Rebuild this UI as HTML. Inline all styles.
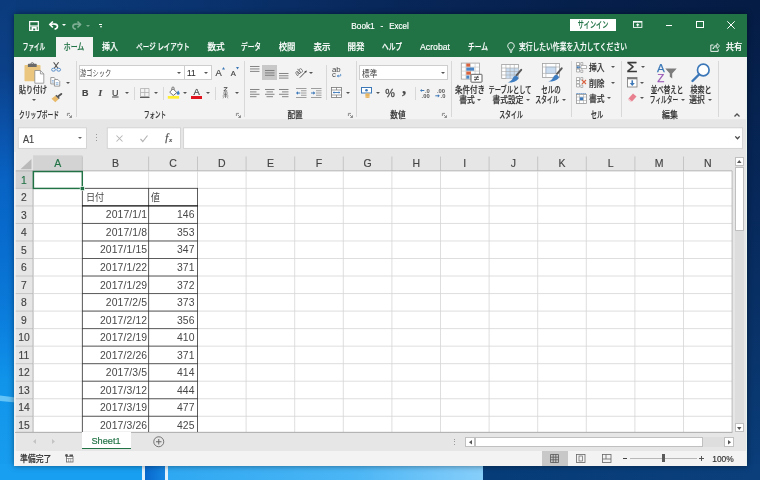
<!DOCTYPE html><html lang="ja"><head><meta charset="utf-8"><title>Book1 - Excel</title><style>
html,body{margin:0;padding:0}
body{width:760px;height:480px;overflow:hidden;position:relative;background:#0a3a7c;font-family:"Liberation Sans","Noto Sans CJK JP",sans-serif;font-size:9.2px;color:#333;font-weight:500;-webkit-text-stroke:.18px currentColor}
.a{position:absolute}
.t{position:absolute;white-space:nowrap;transform:translate(-50%,-50%);line-height:1}
.w{color:#fff}
.l{position:absolute;white-space:nowrap;transform:translate(0,-50%);line-height:1}
.r{position:absolute;white-space:nowrap;transform:translate(-100%,-50%);line-height:1}
.sep{position:absolute;width:1px;background:#d4d4d4}
.box{position:absolute;background:#fff;border:1px solid #cecece;box-sizing:border-box}
.dd{position:absolute;width:0;height:0;border-left:2px solid transparent;border-right:2px solid transparent;border-top:2.5px solid #555;transform:translate(-50%,-50%)}
.cell{font-size:10.4px;color:#484848;font-weight:400;letter-spacing:.12px;-webkit-text-stroke:0}
.hd{font-size:10.3px;color:#444;font-weight:400;-webkit-text-stroke:.15px currentColor}
svg{position:absolute;overflow:visible}
#root{position:absolute;left:0;top:0;width:760px;height:480px;will-change:transform}
</style></head><body><div id="root">
<div class="a" style="left:0;top:0;width:760px;height:480px;background:linear-gradient(90deg,#0b3b7c 0%,#0a3470 25%,#08275a 50%,#06204c 75%,#051c44 100%)"></div>
<div class="a" style="left:0;top:0;width:16px;height:480px;background:linear-gradient(180deg,#0b3b7c 0px,#0b4088 70px,#0a52aa 130px,#0863c4 180px,#076acc 230px,#0a78d8 300px,#0d88e4 350px,#1094ea 380px,#189ef0 480px)"></div>
<div class="a" style="left:0;top:0;width:16px;height:16px;background:linear-gradient(90deg,rgba(12,63,130,0),rgba(12,63,130,0))"></div>
<svg style="left:0;top:390px" width="16" height="16" viewBox="0 0 16 16"><path d="M0 5.500L16 7.500V12.500L0 11z" fill="#74ccf9" opacity=".85"/></svg>
<div class="a" style="left:745px;top:0;width:15px;height:480px;background:linear-gradient(180deg,#051c44 0px,#07285a 200px,#09366e 380px,#0a3f7c 480px)"></div>
<div class="a" style="left:0;top:464px;width:143px;height:16px;background:#189ff2"></div>
<div class="a" style="left:142px;top:464px;width:26px;height:16px;background:#e2f2fd"></div>
<div class="a" style="left:145px;top:464px;width:19.500px;height:16px;background:linear-gradient(90deg,#0868cc,#1586e2)"></div>
<div class="a" style="left:168px;top:464px;width:314.500px;height:16px;background:linear-gradient(90deg,#2ea8f2 0%,#4cb6f5 60%,#86cefa 100%)"></div>
<div class="a" style="left:482.500px;top:464px;width:277.500px;height:16px;background:linear-gradient(90deg,#063c78,#0a3f7c)"></div>
<div class="a" style="left:14px;top:14px;width:733px;height:452px;background:#e6e6e6;box-shadow:0 0 6px rgba(0,0,0,.45)"></div>
<div class="a" style="left:14px;top:14px;width:733px;height:43.5px;background:#217346"></div>
<div class="a" style="left:14px;top:57px;width:733px;height:62.500px;background:linear-gradient(180deg,#f3f3f3 0px,#f3f3f3 61.500px,#e9e9e9 62.500px)"></div>
<div class="t w" style="left:362.5px;top:25.7px;font-size:8.4px;transform-origin:50% 50%;transform:translate(-50%,-50%) scaleX(0.985)">Book1</div>
<div class="t w" style="left:382px;top:25.7px;font-size:8.4px">-</div>
<div class="t w" style="left:398.9px;top:25.7px;font-size:8.4px;transform-origin:50% 50%;transform:translate(-50%,-50%) scaleX(0.947)">Excel</div>
<svg style="left:28.800px;top:20.700px" width="10" height="10" viewBox="0 0 15 15"><path d="M1 1h13v13H1z" fill="none" stroke="#fff" stroke-width="1.800"/><path d="M1 6.600h13v1.700H1z" fill="#fff"/><path d="M3.800 8.300h7.800v5.700h-7.800z" fill="#fff"/><path d="M6.300 11.300h3v2.700h-3z" fill="#217346"/></svg>
<svg style="left:48.900px;top:20.900px" width="9.400" height="8.600" viewBox="0 0 9.400 8.600"><path d="M.9 3.500C4 2.700 8.600 2.600 8.500 5.300C8.400 7 7.300 7.900 5.600 8.100" fill="none" stroke="#fff" stroke-width="1.650"/><path d="M3.900 .5L.9 3.500L3.900 6.500" fill="none" stroke="#fff" stroke-width="1.650"/></svg>
<div class="dd" style="left:64px;top:25.2px;border-top-color:#fff"></div>
<svg style="left:71.800px;top:20.900px;opacity:.42" width="9.400" height="8.600" viewBox="0 0 9.400 8.600"><path d="M8.500 3.500C5.400 2.700 .8 2.600 .9 5.300C1 7 2.100 7.900 3.800 8.100" fill="none" stroke="#fff" stroke-width="1.600"/><path d="M5.500 .5L8.500 3.500L5.500 6.500" fill="none" stroke="#fff" stroke-width="1.600"/></svg>
<div class="dd" style="left:87.5px;top:25.5px;border-top-color:#fff;opacity:.4"></div>
<div class="a" style="left:98.800px;top:23.700px;width:3.400px;height:1px;background:#fff"></div>
<div class="dd" style="left:100.500px;top:27.200px;border-top-color:#fff;border-left-width:1.700px;border-right-width:1.700px;border-top-width:2.200px"></div>
<div class="a" style="left:570px;top:18.7px;width:45.5px;height:12.6px;background:#fff"></div>
<div class="t" style="left:592.75px;top:26.3px;color:#217346;transform-origin:50% 50%;transform:translate(-50%,-50%) scaleX(0.664)">サインイン</div>
<svg style="left:632.800px;top:21.200px" width="9.400" height="6.900" viewBox="0 0 9.400 6.900"><rect x=".5" y=".5" width="8.400" height="5.900" fill="none" stroke="#fff" stroke-width=".9"/><rect x=".5" y=".5" width="8.400" height="1.100" fill="#fff"/><path d="M4.700 2.200L6.700 4.300H5.300V5.600H4.100V4.300H2.700z" fill="#fff"/></svg>
<div class="a" style="left:666px;top:24.500px;width:6.400px;height:1px;background:#fff"></div>
<div class="a" style="left:696.3px;top:20.8px;width:7.4px;height:7.4px;border:1px solid #fff;box-sizing:border-box"></div>
<svg style="left:727px;top:20.6px" width="8" height="8" viewBox="0 0 8 8"><path d="M.3 .3L7.7 7.7M7.7 .3L.3 7.7" stroke="#fff" stroke-width="1"/></svg>
<div class="a" style="left:55.5px;top:37px;width:37px;height:21px;background:#f3f3f3"></div>
<div class="t w" style="left:34px;top:48.3px;;transform-origin:50% 50%;transform:translate(-50%,-50%) scaleX(0.612)">ファイル</div>
<div class="t" style="left:73.75px;top:48.3px;color:#217346;transform-origin:50% 50%;transform:translate(-50%,-50%) scaleX(0.751)">ホーム</div>
<div class="t w" style="left:110px;top:48.3px;;transform-origin:50% 50%;transform:translate(-50%,-50%) scaleX(0.871)">挿入</div>
<div class="t w" style="left:163.1px;top:48.3px;;transform-origin:50% 50%;transform:translate(-50%,-50%) scaleX(0.702)">ページ レイアウト</div>
<div class="t w" style="left:215.6px;top:48.3px;;transform-origin:50% 50%;transform:translate(-50%,-50%) scaleX(0.936)">数式</div>
<div class="t w" style="left:251.25px;top:48.3px;;transform-origin:50% 50%;transform:translate(-50%,-50%) scaleX(0.726)">データ</div>
<div class="t w" style="left:287.1px;top:48.3px;;transform-origin:50% 50%;transform:translate(-50%,-50%) scaleX(0.909)">校閲</div>
<div class="t w" style="left:321.5px;top:48.3px;;transform-origin:50% 50%;transform:translate(-50%,-50%) scaleX(0.925)">表示</div>
<div class="t w" style="left:356px;top:48.3px;;transform-origin:50% 50%;transform:translate(-50%,-50%) scaleX(0.925)">開発</div>
<div class="t w" style="left:391.9px;top:48.3px;;transform-origin:50% 50%;transform:translate(-50%,-50%) scaleX(0.733)">ヘルプ</div>
<div class="t w" style="left:435px;top:48.3px;;transform-origin:50% 50%;transform:translate(-50%,-50%) scaleX(0.947)">Acrobat</div>
<div class="t w" style="left:478px;top:48.3px;;transform-origin:50% 50%;transform:translate(-50%,-50%) scaleX(0.733)">チーム</div>
<svg style="left:506.5px;top:41.5px" width="8" height="11" viewBox="0 0 8 11"><path d="M4 .6a3.3 3.3 0 0 1 2 5.9c-.5.5-.6 1-.6 1.6H2.6c0-.6-.1-1.1-.6-1.6A3.3 3.3 0 0 1 4 .6z" fill="none" stroke="#fff" stroke-width=".9"/><path d="M2.8 9.3h2.4M3.2 10.5h1.6" stroke="#fff" stroke-width=".8"/></svg>
<div class="l w" style="left:518.75px;top:48.3px;;transform-origin:0 50%;transform:translate(0,-50%) scaleX(0.737)">実行したい作業を入力してください</div>
<svg style="left:710px;top:41.600px" width="10" height="10" viewBox="0 0 10 10"><path d="M3.5 3H.8v6.4h7.4V7.2" fill="none" stroke="#fff" stroke-width=".9"/><path d="M3 7c.3-2.3 1.600-3.600 4-3.700V1.500L9.600 4 7 6.500V4.700C5 4.700 3.800 5.400 3 7z" fill="none" stroke="#fff" stroke-width=".8"/></svg>
<div class="t w" style="left:733.75px;top:48.4px;;transform-origin:50% 50%;transform:translate(-50%,-50%) scaleX(0.898)">共有</div>
<div class="sep" style="left:76px;top:60.5px;height:56.5px;background:#d8d8d8"></div>
<div class="sep" style="left:244.3px;top:60.5px;height:56.5px;background:#d8d8d8"></div>
<div class="sep" style="left:356.4px;top:60.5px;height:56.5px;background:#d8d8d8"></div>
<div class="sep" style="left:450.5px;top:60.5px;height:56.5px;background:#d8d8d8"></div>
<div class="sep" style="left:570.5px;top:60.5px;height:56.5px;background:#d8d8d8"></div>
<div class="sep" style="left:621.2px;top:60.5px;height:56.5px;background:#d8d8d8"></div>
<div class="sep" style="left:717.9px;top:60.5px;height:56.5px;background:#d8d8d8"></div>
<svg style="left:24px;top:62px" width="21" height="22" viewBox="24 62 21 22"><rect x="24.500" y="65" width="16" height="16.300" rx=".8" fill="#eac67e"/><rect x="27.900" y="63.800" width="8.800" height="3.200" rx=".6" fill="#6a6a6a"/><circle cx="32.300" cy="63.900" r="1.300" fill="none" stroke="#6a6a6a" stroke-width=".9"/><path d="M34.800 70.500h5.600l3.400 3.400v9.300h-9z" fill="#fff" stroke="#8a8a8a" stroke-width=".8"/><path d="M40.400 70.500v3.400h3.400" fill="none" stroke="#8a8a8a" stroke-width=".8"/></svg>
<div class="t" style="left:32.6px;top:91.2px;;transform-origin:50% 50%;transform:translate(-50%,-50%) scaleX(0.759)">貼り付け</div>
<div class="dd" style="left:34.2px;top:99.5px;border-top-color:#555"></div>
<svg style="left:51px;top:62px" width="10.200" height="9.800" viewBox="0 0 10.200 9.800"><path d="M2.600 .3L6.900 6.300M7.600 .3L3.300 6.300" stroke="#505050" stroke-width="1.100" fill="none"/><ellipse cx="2.500" cy="7.700" rx="1.900" ry="1.500" fill="none" stroke="#4a86c5" stroke-width=".9"/><ellipse cx="7.700" cy="7.700" rx="1.900" ry="1.500" fill="none" stroke="#4a86c5" stroke-width=".9"/></svg>
<svg style="left:50.200px;top:77.300px" width="10.500" height="9.600" viewBox="0 0 11 10.500"><path d="M.6 .6h3.600l1.800 1.800v5.200H.6z" fill="#fff" stroke="#7a7a7a" stroke-width=".8"/><path d="M4.600 2.800h3.800l2 2v5.200H4.600z" fill="#fff" stroke="#7a7a7a" stroke-width=".8"/><path d="M1.800 4h2M1.800 5.600h2M6 6.300h3M6 8h3" stroke="#4a86c5" stroke-width=".7"/></svg>
<div class="dd" style="left:67.5px;top:82.6px;border-top-color:#555"></div>
<svg style="left:50.800px;top:93px" width="11.500" height="9.500" viewBox="0 0 11.500 9.500"><path d="M7.300 3.300L10.300 .9" stroke="#555" stroke-width="1.900" stroke-linecap="round"/><path d="M4.300 2.800L7.800 6 4.300 9.200 .5 5.800z" fill="#e9ba6a"/><path d="M4.900 2.200L8.300 5.500" stroke="#555" stroke-width="1.500"/></svg>
<div class="t" style="left:39.2px;top:115.5px;;transform-origin:50% 50%;transform:translate(-50%,-50%) scaleX(0.624)">クリップボード</div>
<svg style="left:67.0px;top:113.0px" width="5" height="5" viewBox="0 0 5 5"><path d="M.4 3V.4H3" fill="none" stroke="#777" stroke-width=".8"/><path d="M1.800 1.800L4.300 4.300M4.500 2.300V4.500H2.300" fill="none" stroke="#777" stroke-width=".8"/></svg>
<div class="box" style="left:78.500px;top:65px;width:106px;height:15px"></div>
<div class="l" style="left:80.3px;top:73.4px;font-size:8.300px;font-weight:400;color:#444;-webkit-text-stroke:0;transform-origin:0 50%;transform:translate(0,-50%) scaleX(0.754)">游ゴシック</div>
<div class="dd" style="left:179px;top:73.2px;border-top-color:#555"></div>
<div class="box" style="left:184px;top:65px;width:27.500px;height:15px"></div>
<div class="l" style="left:187px;top:73.9px;font-weight:400;transform-origin:0 50%;transform:translate(0,-50%) scaleX(0.901)">11</div>
<div class="dd" style="left:206.3px;top:73.2px;border-top-color:#555"></div>
<div class="t" style="left:218.7px;top:73.2px;font-size:9.400px;color:#444;font-weight:400">A</div>
<svg style="left:221.500px;top:67px" width="3" height="2.500" viewBox="0 0 3 2.500"><path d="M0 2.500L1.500 0 3 2.500z" fill="#3c78b8"/></svg>
<div class="t" style="left:233.4px;top:74.2px;font-size:7.600px;color:#444;font-weight:400">A</div>
<svg style="left:236px;top:67px" width="3" height="2.500" viewBox="0 0 3 2.500"><path d="M0 0L1.500 2.500 3 0z" fill="#3c78b8"/></svg>
<div class="t" style="left:85.3px;top:93px;font-weight:bold;font-size:9px;color:#444">B</div>
<div class="t" style="left:100.3px;top:93px;font-style:italic;font-size:9px;color:#444;font-family:Liberation Serif,serif;font-weight:bold">I</div>
<div class="t" style="left:115.3px;top:92.8px;font-size:9px;color:#444;text-decoration:underline">U</div>
<div class="dd" style="left:127px;top:93.2px;border-top-color:#555"></div>
<div class="sep" style="left:134.3px;top:87px;height:13px;background:#d8d8d8"></div>
<svg style="left:139.500px;top:88px" width="9.500" height="10" viewBox="0 0 9.500 10"><path d="M.5 .5h8.500v8H.5zM4.750 .5v8M.5 4.500h8.500" fill="none" stroke="#b0b0b0" stroke-width=".8"/><path d="M0 9.400h9.500" stroke="#555" stroke-width="1.100"/></svg>
<div class="dd" style="left:155.6px;top:93.2px;border-top-color:#555"></div>
<div class="sep" style="left:163px;top:87px;height:13px;background:#d8d8d8"></div>
<svg style="left:167px;top:86px" width="14" height="14" viewBox="167 86 14 14"><path d="M169.700 92.100L173 88.800l3.800 3.700-3.500 3z" fill="#fff" stroke="#5a5a5a" stroke-width=".85"/><path d="M171.800 90V88.200a1.200 1.200 0 0 1 2.400 0v1.600" fill="none" stroke="#5a5a5a" stroke-width=".75"/><path d="M178.200 90.600c1 1.400 1.400 2.100 1.400 2.800a1.400 1.400 0 0 1-2.800 0c0-.7.400-1.400 1.400-2.800z" fill="#3e7cc0"/><rect x="167.800" y="96" width="11.300" height="2.700" fill="#ffee33"/></svg>
<div class="dd" style="left:184.7px;top:93.2px;border-top-color:#555"></div>
<div class="t" style="left:196.6px;top:92px;font-size:9.5px;color:#444">A</div>
<div class="a" style="left:191.300px;top:96px;width:10.700px;height:2.500px;background:#e0141e"></div>
<div class="dd" style="left:207.5px;top:93.2px;border-top-color:#555"></div>
<div class="sep" style="left:215px;top:87px;height:13px;background:#d8d8d8"></div>
<svg style="left:221.500px;top:87.300px" width="7" height="11.500" viewBox="0 0 7 11.500"><path d="M1.800 .6h3.400L1.800 4h3.400" fill="none" stroke="#505050" stroke-width=".95"/><path d="M1 6h5M1.600 7.500h3.800M.6 9h5.800M3.500 5.500v5.500M1.800 10.500l-1 .6M5.200 10.500l1 .6" fill="none" stroke="#666" stroke-width=".7"/></svg>
<div class="dd" style="left:236.6px;top:93.2px;border-top-color:#555"></div>
<div class="t" style="left:154.9px;top:115.5px;;transform-origin:50% 50%;transform:translate(-50%,-50%) scaleX(0.599)">フォント</div>
<svg style="left:236.0px;top:113.0px" width="5" height="5" viewBox="0 0 5 5"><path d="M.4 3V.4H3" fill="none" stroke="#777" stroke-width=".8"/><path d="M1.800 1.800L4.300 4.300M4.500 2.300V4.500H2.300" fill="none" stroke="#777" stroke-width=".8"/></svg>
<div class="a" style="left:262px;top:65px;width:15px;height:15px;background:#c8c8c8"></div>
<svg style="left:249.75px;top:66px" width="9.5" height="7.3500000000000005" viewBox="0 0 9.5 7.3500000000000005"><path d="M0.00 0.5h9.5M0.00 2.95h9.5M0.00 5.4h9.5" stroke="#777" stroke-width=".9" fill="none"/></svg>
<svg style="left:264.75px;top:69.5px" width="9.5" height="7.199999999999999" viewBox="0 0 9.5 7.199999999999999"><path d="M0.00 0.5h9.5M0.00 2.9h9.5M0.00 5.3h9.5" stroke="#777" stroke-width=".9" fill="none"/></svg>
<svg style="left:279.25px;top:72.9px" width="9.5" height="6.8999999999999995" viewBox="0 0 9.5 6.8999999999999995"><path d="M0.00 0.5h9.5M0.00 2.8h9.5M0.00 5.1h9.5" stroke="#777" stroke-width=".9" fill="none"/></svg>
<svg style="left:296px;top:66.500px" width="11" height="11" viewBox="0 0 11 11"><text x="-.5" y="7.300" font-size="7.600" fill="#4a4a4a" transform="rotate(-42 3 6)" font-family="Liberation Sans,sans-serif">ab</text><path d="M3.800 10.700L10 4.300" stroke="#4a4a4a" stroke-width="1"/><path d="M10.900 3.400L8.300 4.300 10 6z" fill="#4a4a4a"/></svg>
<div class="dd" style="left:311px;top:73.2px;border-top-color:#555"></div>
<div class="sep" style="left:326.4px;top:64.5px;height:35.5px;background:#d8d8d8"></div>
<svg style="left:332px;top:66px" width="11" height="12" viewBox="0 0 11 12"><text x="0" y="6" font-size="7.800" fill="#444" font-family="Liberation Sans,sans-serif">ab</text><text x="0" y="11.200" font-size="7.800" fill="#444" font-family="Liberation Sans,sans-serif">c</text><path d="M5.500 10h2.500c1.200 0 1.200-1.800 0-1.800" stroke="#4a86c5" stroke-width=".9" fill="none"/><path d="M4.800 10l1.700-1.400v2.800z" fill="#4a86c5"/></svg>
<svg style="left:249.75px;top:89.2px" width="9.5" height="9.6" viewBox="0 0 9.5 9.6"><path d="M0.00 0.5h9.5M0.00 2.9h6.5M0.00 5.3h9.5M0.00 7.699999999999999h6.5" stroke="#777" stroke-width=".9" fill="none"/></svg>
<svg style="left:264.75px;top:89.2px" width="9.5" height="9.6" viewBox="0 0 9.5 9.6"><path d="M0.00 0.5h9.5M1.50 2.9h6.5M0.00 5.3h9.5M1.50 7.699999999999999h6.5" stroke="#777" stroke-width=".9" fill="none"/></svg>
<svg style="left:279.25px;top:89.2px" width="9.5" height="9.6" viewBox="0 0 9.5 9.6"><path d="M0.00 0.5h9.5M3.00 2.9h6.5M0.00 5.3h9.5M3.00 7.699999999999999h6.5" stroke="#777" stroke-width=".9" fill="none"/></svg>
<svg style="left:296px;top:88px" width="10.500" height="10" viewBox="0 0 10.500 10"><path d="M0 .5h10.500M5 2.750h5.500M5 5h5.500M5 7.250h5.500M0 9.500h10.500" stroke="#888" stroke-width=".8"/><path d="M4.300 5H.8" stroke="#3c78b8" stroke-width="1"/><path d="M0 5l2-1.800v3.600z" fill="#3c78b8"/></svg>
<svg style="left:310.700px;top:88px" width="10.500" height="10" viewBox="0 0 10.500 10"><path d="M0 .5h10.500M5 2.750h5.500M5 5h5.500M5 7.250h5.500M0 9.500h10.500" stroke="#888" stroke-width=".8"/><path d="M0 5h3.500" stroke="#3c78b8" stroke-width="1"/><path d="M4.300 5l-2-1.800v3.600z" fill="#3c78b8"/></svg>
<svg style="left:331.200px;top:87px" width="11" height="11" viewBox="0 0 11 11"><rect x=".5" y=".5" width="10" height="10" fill="#fff" stroke="#777" stroke-width=".8"/><path d="M.5 3h10M.5 8h10M5.500 .5v2.500M5.500 8v2.500" stroke="#777" stroke-width=".7"/><path d="M2.500 5.500h6" stroke="#3c78b8" stroke-width=".9"/><path d="M1.800 5.500l1.500-1.200v2.400zM9.200 5.500l-1.500-1.200v2.400z" fill="#3c78b8"/></svg>
<div class="dd" style="left:348px;top:93.2px;border-top-color:#555"></div>
<div class="t" style="left:294.5px;top:115.5px;;transform-origin:50% 50%;transform:translate(-50%,-50%) scaleX(0.827)">配置</div>
<svg style="left:348.0px;top:113.0px" width="5" height="5" viewBox="0 0 5 5"><path d="M.4 3V.4H3" fill="none" stroke="#777" stroke-width=".8"/><path d="M1.800 1.800L4.300 4.300M4.500 2.300V4.500H2.300" fill="none" stroke="#777" stroke-width=".8"/></svg>
<div class="box" style="left:359.300px;top:65px;width:88.500px;height:15px"></div>
<div class="l" style="left:361.8px;top:73.9px;font-size:8.700px;font-weight:400;color:#444;-webkit-text-stroke:0;transform-origin:0 50%;transform:translate(0,-50%) scaleX(0.881)">標準</div>
<div class="dd" style="left:442.5px;top:73.2px;border-top-color:#555"></div>
<svg style="left:361px;top:87px" width="11.500" height="11" viewBox="0 0 11.500 11"><rect x=".5" y=".5" width="10" height="5.500" fill="#fff" stroke="#3c78b8" stroke-width="1"/><circle cx="5.500" cy="3.250" r="1.300" fill="#3c78b8"/><ellipse cx="6.500" cy="7.200" rx="2.400" ry=".9" fill="#e8b660"/><ellipse cx="6.500" cy="8.700" rx="2.400" ry=".9" fill="#e8b660"/><ellipse cx="6.500" cy="10.100" rx="2.400" ry=".9" fill="#e8b660"/></svg>
<div class="dd" style="left:377.5px;top:93.2px;border-top-color:#555"></div>
<div class="t" style="left:390px;top:93.2px;font-size:10.800px;color:#4a4a4a;font-weight:400;-webkit-text-stroke:.3px #4a4a4a">%</div>
<div class="t" style="left:404.2px;top:87.6px;font-size:17px;color:#4a4a4a;font-weight:bold;font-family:Liberation Serif,serif">,</div>
<div class="sep" style="left:414.6px;top:87px;height:13px;background:#d8d8d8"></div>
<svg style="left:419.800px;top:87.800px" width="11" height="11" viewBox="0 0 11 11"><path d="M4.300 2.500H1.200" stroke="#3c78b8" stroke-width="1"/><path d="M0 2.500l1.900-1.600v3.200z" fill="#3c78b8"/><text x="5" y="4.600" font-size="5.800" font-weight="bold" fill="#555" font-family="Liberation Sans,sans-serif">.0</text><text x="1.600" y="9.900" font-size="5.800" font-weight="bold" fill="#555" font-family="Liberation Sans,sans-serif">.00</text></svg>
<svg style="left:434.800px;top:87.800px" width="11" height="11" viewBox="0 0 11 11"><text x="2" y="4.600" font-size="5.800" font-weight="bold" fill="#555" font-family="Liberation Sans,sans-serif">.00</text><path d="M.3 7.800h3.300" stroke="#3c78b8" stroke-width="1"/><path d="M4.800 7.800l-1.900-1.600v3.200z" fill="#3c78b8"/><text x="5.600" y="9.900" font-size="5.800" font-weight="bold" fill="#555" font-family="Liberation Sans,sans-serif">.0</text></svg>
<div class="t" style="left:397.9px;top:115.5px;;transform-origin:50% 50%;transform:translate(-50%,-50%) scaleX(0.833)">数値</div>
<svg style="left:442.0px;top:113.0px" width="5" height="5" viewBox="0 0 5 5"><path d="M.4 3V.4H3" fill="none" stroke="#777" stroke-width=".8"/><path d="M1.800 1.800L4.300 4.300M4.500 2.300V4.500H2.300" fill="none" stroke="#777" stroke-width=".8"/></svg>
<svg style="left:460px;top:62px" width="24" height="22" viewBox="460 62 24 22"><rect x="461.300" y="63.100" width="18.300" height="16" fill="#fff" stroke="#a0a0a0" stroke-width=".8"/><path d="M461.300 67.100h18.300M461.300 71.100h18.300M461.300 75.100h18.300M465.900 63.100v16M470.500 63.100v16M475.100 63.100v16" stroke="#c0c0c0" stroke-width=".6"/><rect x="466.300" y="63.500" width="3.800" height="3.200" fill="#d9623e"/><rect x="466.300" y="67.500" width="7.800" height="3.200" fill="#4a86c5"/><rect x="466.300" y="71.500" width="4.600" height="3.200" fill="#d9623e"/><rect x="466.300" y="75.500" width="3.100" height="3.200" fill="#4a86c5"/><rect x="471" y="74.300" width="11" height="7.900" rx=".6" fill="#fff" stroke="#505050" stroke-width=".9"/><path d="M474 77.200h5M474 79.400h5M478 75.800l-3 5" stroke="#333" stroke-width=".8" fill="none"/></svg>
<div class="t" style="left:470.3px;top:91.1px;;transform-origin:50% 50%;transform:translate(-50%,-50%) scaleX(0.816)">条件付き</div>
<div class="t" style="left:467.2px;top:100.6px;;transform-origin:50% 50%;transform:translate(-50%,-50%) scaleX(0.844)">書式</div>
<div class="dd" style="left:479.4px;top:100.1px;border-top-color:#555"></div>
<svg style="left:500px;top:62px" width="24" height="22" viewBox="500 62 24 22"><rect x="501.700" y="64.500" width="16.700" height="14" fill="#fff" stroke="#a0a0a0" stroke-width=".8"/><rect x="505.900" y="68" width="12.500" height="10.500" fill="#c9dcf0"/><path d="M501.700 68h16.700M501.700 71.500h16.700M501.700 75h16.700M505.900 64.500v14M510.100 64.500v14M514.300 64.500v14" stroke="#a8a8a8" stroke-width=".6"/><path d="M521.200 69.800L516.500 75.300" stroke="#5a5a5a" stroke-width="2" stroke-linecap="round"/><path d="M516 75.800c1.600 .4 2.600 1.600 2.300 3.100-1.700 2.400-5.500 3.600-10.600 3.700 3-1.400 4.200-2.700 5-4.200.7-1.500 1.700-2.600 3.300-2.600z" fill="#3e7cc0"/></svg>
<div class="t" style="left:510.4px;top:91.1px;;transform-origin:50% 50%;transform:translate(-50%,-50%) scaleX(0.677)">テーブルとして</div>
<div class="t" style="left:507.5px;top:100.6px;;transform-origin:50% 50%;transform:translate(-50%,-50%) scaleX(0.838)">書式設定</div>
<div class="dd" style="left:527.9px;top:100.1px;border-top-color:#555"></div>
<svg style="left:541px;top:62px" width="24" height="22" viewBox="541 62 24 22"><rect x="542.500" y="63.500" width="17" height="14" fill="#fff" stroke="#a0a0a0" stroke-width=".8"/><rect x="545.900" y="67" width="10" height="6.400" fill="#c9dcf0" stroke="#9dbbe0" stroke-width=".5"/><path d="M542.500 67h17M542.500 73.400h17M545.900 63.500v14M555.900 63.500v14" stroke="#a8a8a8" stroke-width=".6"/><path d="M561.700 68.300L557 73.800" stroke="#5a5a5a" stroke-width="2" stroke-linecap="round"/><path d="M556.500 74.800c1.600 .4 2.600 1.600 2.300 3.100-1.700 2.400-5.500 3.600-10.600 3.700 3-1.400 4.200-2.700 5-4.200.7-1.500 1.700-2.600 3.300-2.600z" fill="#3e7cc0"/></svg>
<div class="t" style="left:551.4px;top:91.1px;;transform-origin:50% 50%;transform:translate(-50%,-50%) scaleX(0.704)">セルの</div>
<div class="t" style="left:547.2px;top:100.6px;;transform-origin:50% 50%;transform:translate(-50%,-50%) scaleX(0.645)">スタイル</div>
<div class="dd" style="left:563.5px;top:100.1px;border-top-color:#555"></div>
<div class="t" style="left:510.5px;top:115.5px;;transform-origin:50% 50%;transform:translate(-50%,-50%) scaleX(0.645)">スタイル</div>
<svg style="left:575.500px;top:61.500px" width="11" height="11" viewBox="0 0 11 11"><path d="M.5 .5h3v3h-3zM.5 3.700h3v3h-3zM.5 7h3v3h-3zM4.800 .5h2v2.500h-2zM4.800 8h2v2.500h-2z" fill="#fff" stroke="#888" stroke-width=".6"/><rect x="5" y="3.700" width="5.500" height="3" fill="#fff" stroke="#888" stroke-width=".6"/><path d="M4.500 5.200H1.500" stroke="#3c78b8" stroke-width="1"/><path d="M.5 5.200l1.800-1.500v3z" fill="#3c78b8"/></svg>
<div class="l" style="left:589px;top:68.8px;;transform-origin:0 50%;transform:translate(0,-50%) scaleX(0.849)">挿入</div>
<div class="dd" style="left:613.2px;top:67.2px;border-top-color:#555"></div>
<svg style="left:575.500px;top:77px" width="11" height="11" viewBox="0 0 11 11"><path d="M.5 .5h3v3h-3zM.5 3.700h3v3h-3zM.5 7h3v3h-3zM4.800 .5h2v2.500h-2zM4.800 8h2v2.500h-2z" fill="#fff" stroke="#888" stroke-width=".6"/><path d="M6 3l4 4M10 3l-4 4" stroke="#d8623f" stroke-width="1.100"/></svg>
<div class="l" style="left:589px;top:85px;;transform-origin:0 50%;transform:translate(0,-50%) scaleX(0.849)">削除</div>
<div class="dd" style="left:613.2px;top:82.7px;border-top-color:#555"></div>
<svg style="left:575.500px;top:92.500px" width="11" height="11" viewBox="0 0 11 11"><rect x=".5" y="1.500" width="10" height="9" fill="#fff" stroke="#888" stroke-width=".7"/><path d="M.5 .5h10" stroke="#3c78b8" stroke-width=".9" stroke-dasharray="1.200 .8"/><path d="M.5 4h10M.5 7.500h10M3.500 1.500v9M7.500 1.500v9" stroke="#999" stroke-width=".5"/><rect x="3.800" y="4.300" width="3.400" height="2.900" fill="#3c78b8"/></svg>
<div class="l" style="left:589px;top:100px;;transform-origin:0 50%;transform:translate(0,-50%) scaleX(0.849)">書式</div>
<div class="dd" style="left:609.2px;top:97.7px;border-top-color:#555"></div>
<div class="t" style="left:596.6px;top:115.5px;;transform-origin:50% 50%;transform:translate(-50%,-50%) scaleX(0.686)">セル</div>
<div class="t" style="left:632px;top:66.8px;font-size:14px;color:#3a3a3a;font-family:Liberation Sans,DejaVu Sans,sans-serif;-webkit-text-stroke:.3px #3a3a3a;transform-origin:50% 50%;transform:translate(-50%,-50%) scaleX(1.271)">Σ</div>
<div class="dd" style="left:643px;top:67.3px;border-top-color:#555"></div>
<svg style="left:627px;top:77px" width="10.500" height="10.500" viewBox="0 0 10.500 10.500"><rect x=".5" y=".5" width="9.500" height="9.500" fill="#fff" stroke="#777" stroke-width=".8"/><rect x=".5" y=".5" width="9.500" height="1.800" fill="#777"/><path d="M5.250 3.300v3.500" stroke="#3c78b8" stroke-width="1.600"/><path d="M5.250 9L2.700 6h5.100z" fill="#3c78b8"/></svg>
<div class="dd" style="left:641.5px;top:82.9px;border-top-color:#555"></div>
<svg style="left:627.300px;top:93.200px" width="10" height="9" viewBox="0 0 10 9"><path d="M6 .5l3.500 3-4.500 5-3.500-3z" fill="#e8808f"/><path d="M1.500 5.500l3.500 3-1.500.3-2.500-2z" fill="#f4c0c8"/></svg>
<div class="dd" style="left:641.5px;top:98.3px;border-top-color:#555"></div>
<div class="t" style="left:660.8px;top:67.8px;font-size:11.600px;color:#3c78b8;font-weight:400;-webkit-text-stroke:.25px #3c78b8">A</div>
<div class="t" style="left:660.8px;top:77.5px;font-size:11.600px;color:#9b59b6;font-weight:400;-webkit-text-stroke:.25px #9b59b6">Z</div>
<svg style="left:664.800px;top:67.800px" width="12" height="11" viewBox="0 0 12 11"><path d="M.3 .5h11.400L7.200 5.500v5L4.800 8.800V5.500z" fill="#7c7c7c"/></svg>
<div class="t" style="left:667px;top:91.1px;;transform-origin:50% 50%;transform:translate(-50%,-50%) scaleX(0.712)">並べ替えと</div>
<div class="t" style="left:663.7px;top:100.6px;;transform-origin:50% 50%;transform:translate(-50%,-50%) scaleX(0.621)">フィルター</div>
<div class="dd" style="left:682.6px;top:100.1px;border-top-color:#555"></div>
<svg style="left:691px;top:62.500px" width="19.500" height="19" viewBox="0 0 19.500 19"><circle cx="12.300" cy="7" r="5.800" fill="#fff" stroke="#3c78b8" stroke-width="1.700"/><path d="M8 11.500L1.500 18" stroke="#3c78b8" stroke-width="2.400" stroke-linecap="round"/></svg>
<div class="t" style="left:700.8px;top:91.1px;;transform-origin:50% 50%;transform:translate(-50%,-50%) scaleX(0.769)">検索と</div>
<div class="t" style="left:697px;top:100.6px;;transform-origin:50% 50%;transform:translate(-50%,-50%) scaleX(0.838)">選択</div>
<div class="dd" style="left:709.5px;top:100.1px;border-top-color:#555"></div>
<div class="t" style="left:669.7px;top:115.5px;;transform-origin:50% 50%;transform:translate(-50%,-50%) scaleX(0.860)">編集</div>
<svg style="left:733.800px;top:113px" width="6" height="4" viewBox="0 0 6 4"><path d="M.5 3.500L3 1l2.500 2.500" fill="none" stroke="#505050" stroke-width="1.300"/></svg>
<svg style="left:0;top:0" width="760" height="160" viewBox="0 0 760 160"><g fill="#fff" stroke="#d2d2d2" stroke-width=".9"><rect x="18.300" y="127.800" width="68.200" height="20.600"/><rect x="107.300" y="127.800" width="73.200" height="20.600"/><rect x="183.600" y="127.800" width="559" height="20.600"/></g></svg>
<div class="l" style="left:23px;top:140px;font-size:10.300px;color:#444;font-weight:400;transform-origin:0 50%;transform:translate(0,-50%) scaleX(0.888)">A1</div>
<div class="dd" style="left:79.500px;top:138px;border-top-color:#666;border-left-width:2.300px;border-right-width:2.300px;border-top-width:2.600px"></div>
<div class="a" style="left:96px;top:133.5px;width:1px;height:1px;background:#999"></div>
<div class="a" style="left:96px;top:136.5px;width:1px;height:1px;background:#999"></div>
<div class="a" style="left:96px;top:139.5px;width:1px;height:1px;background:#999"></div>
<svg style="left:116px;top:134.500px" width="7" height="7" viewBox="0 0 7 7"><path d="M.5 .5l6 6M6.500 .5l-6 6" stroke="#b4b4b4" stroke-width="1.050"/></svg>
<svg style="left:140px;top:134.500px" width="8" height="7" viewBox="0 0 8 7"><path d="M.5 4l2.300 2.500L7.500 .5" fill="none" stroke="#b4b4b4" stroke-width="1.150"/></svg>
<div class="t" style="left:166.8px;top:137.6px;font-style:italic;font-size:10.500px;color:#505050;font-family:Liberation Serif,serif;-webkit-text-stroke:.25px #505050">f</div>
<div class="t" style="left:170.6px;top:139.8px;font-style:italic;font-weight:bold;font-size:6.500px;color:#505050;font-family:Liberation Serif,serif">x</div>
<svg style="left:735px;top:136.300px" width="5" height="3.500" viewBox="0 0 5 3.500"><path d="M.3 .4L2.500 2.700 4.700 .4" fill="none" stroke="#444" stroke-width="1.300"/></svg>
<div class="a" style="left:14px;top:152px;width:2px;height:299px;background:#efefef"></div>
<svg style="left:0;top:0" width="760" height="480" viewBox="0 0 760 480"><rect x="33.1" y="170.85" width="699.00" height="261.45" fill="#fff"/><rect x="33.1" y="155.300" width="49.30" height="15.55" fill="#d3d3d3"/><rect x="15.700" y="170.85" width="17.40" height="17.53" fill="#d3d3d3"/><path d="M31.500 159v10.300H20.400z" fill="#b9b9b9"/><path d="M82.4 156.500V170.85M148.6 156.500V170.85M197.5 156.500V170.85M246.1 156.500V170.85M294.7 156.500V170.85M343.3 156.500V170.85M391.9 156.500V170.85M440.5 156.500V170.85M489.1 156.500V170.85M537.7 156.500V170.85M586.3 156.500V170.85M634.9 156.500V170.85M683.5 156.500V170.85" stroke="#bdbdbd" stroke-width=".8" fill="none"/><path d="M15.700 188.38H33.1M15.700 205.91H33.1M15.700 223.44H33.1M15.700 240.97H33.1M15.700 258.5H33.1M15.700 276.03H33.1M15.700 293.56H33.1M15.700 311.09H33.1M15.700 328.62H33.1M15.700 346.15H33.1M15.700 363.68H33.1M15.700 381.21H33.1M15.700 398.74H33.1M15.700 416.27H33.1" stroke="#bdbdbd" stroke-width=".8" fill="none"/><path d="M15.700 170.85H732.1M33.1 170.85V432.3" stroke="#aeaeae" stroke-width=".9" fill="none"/><path d="M82.4 171.35V432.3M148.6 171.35V432.3M197.5 171.35V432.3M246.1 171.35V432.3M294.7 171.35V432.3M343.3 171.35V432.3M391.9 171.35V432.3M440.5 171.35V432.3M489.1 171.35V432.3M537.7 171.35V432.3M586.3 171.35V432.3M634.9 171.35V432.3M683.5 171.35V432.3M33.6 188.38H732.1M33.6 205.91H732.1M33.6 223.44H732.1M33.6 240.97H732.1M33.6 258.5H732.1M33.6 276.03H732.1M33.6 293.56H732.1M33.6 311.09H732.1M33.6 328.62H732.1M33.6 346.15H732.1M33.6 363.68H732.1M33.6 381.21H732.1M33.6 398.74H732.1M33.6 416.27H732.1" stroke="#d6d6d6" stroke-width=".8" fill="none"/><path d="M732.1 170.85V432.3M15.700 432.3H732.5" stroke="#b4b4b4" stroke-width=".9" fill="none"/><path d="M82.4 187.98V432.3M148.6 187.98V432.3M197.5 187.98V432.3M82.0 188.38H197.9M82.0 223.44H197.9M82.0 240.97H197.9M82.0 258.5H197.9M82.0 276.03H197.9M82.0 293.56H197.9M82.0 311.09H197.9M82.0 328.62H197.9M82.0 346.15H197.9M82.0 363.68H197.9M82.0 381.21H197.9M82.0 398.74H197.9M82.0 416.27H197.9" stroke="#3a3a3a" stroke-width=".8" fill="none"/><path d="M82.0 205.91H197.9" stroke="#111" stroke-width="1.400" fill="none"/><rect x="33.4" y="171.54999999999998" width="48.90" height="16.88" fill="none" stroke="#217346" stroke-width="1.450"/><rect x="80.20" y="186.48" width="4.200" height="4.200" fill="#217346" stroke="#fff" stroke-width=".7"/></svg>
<div class="t hd" style="left:57.8px;top:163.4px;color:#217346;font-size:10.500px">A</div>
<div class="t hd" style="left:115.5px;top:163.4px;color:#444;font-size:10.500px">B</div>
<div class="t hd" style="left:173.1px;top:163.4px;color:#444;font-size:10.500px">C</div>
<div class="t hd" style="left:221.8px;top:163.4px;color:#444;font-size:10.500px">D</div>
<div class="t hd" style="left:270.4px;top:163.4px;color:#444;font-size:10.500px">E</div>
<div class="t hd" style="left:319.0px;top:163.4px;color:#444;font-size:10.500px">F</div>
<div class="t hd" style="left:367.6px;top:163.4px;color:#444;font-size:10.500px">G</div>
<div class="t hd" style="left:416.2px;top:163.4px;color:#444;font-size:10.500px">H</div>
<div class="t hd" style="left:464.8px;top:163.4px;color:#444;font-size:10.500px">I</div>
<div class="t hd" style="left:513.4px;top:163.4px;color:#444;font-size:10.500px">J</div>
<div class="t hd" style="left:562.0px;top:163.4px;color:#444;font-size:10.500px">K</div>
<div class="t hd" style="left:610.6px;top:163.4px;color:#444;font-size:10.500px">L</div>
<div class="t hd" style="left:659.2px;top:163.4px;color:#444;font-size:10.500px">M</div>
<div class="t hd" style="left:707.8px;top:163.4px;color:#444;font-size:10.500px">N</div>
<div class="t hd" style="left:23.9px;top:180.5px;color:#217346">1</div>
<div class="t hd" style="left:23.9px;top:198.0px;color:#444">2</div>
<div class="t hd" style="left:23.9px;top:215.6px;color:#444">3</div>
<div class="t hd" style="left:23.9px;top:233.1px;color:#444">4</div>
<div class="t hd" style="left:23.9px;top:250.6px;color:#444">5</div>
<div class="t hd" style="left:23.9px;top:268.2px;color:#444">6</div>
<div class="t hd" style="left:23.9px;top:285.7px;color:#444">7</div>
<div class="t hd" style="left:23.9px;top:303.2px;color:#444">8</div>
<div class="t hd" style="left:23.9px;top:320.8px;color:#444">9</div>
<div class="t hd" style="left:23.9px;top:338.3px;color:#444">10</div>
<div class="t hd" style="left:23.9px;top:355.8px;color:#444">11</div>
<div class="t hd" style="left:23.9px;top:373.3px;color:#444">12</div>
<div class="t hd" style="left:23.9px;top:390.9px;color:#444">13</div>
<div class="t hd" style="left:23.9px;top:408.4px;color:#444">14</div>
<div class="t hd" style="left:23.9px;top:425.9px;color:#444">15</div>
<div class="l cell" style="left:85.5px;top:198.1px;font-size:9.700px;letter-spacing:0;transform-origin:0 50%;transform:translate(0,-50%) scaleX(0.939)">日付</div>
<div class="l cell" style="left:151.4px;top:198.1px;font-size:9.700px;letter-spacing:0;transform-origin:0 50%;transform:translate(0,-50%) scaleX(0.908)">値</div>
<div class="r cell" style="left:147.2px;top:215.4px;">2017/1/1</div>
<div class="r cell" style="left:194.6px;top:215.4px;">146</div>
<div class="r cell" style="left:147.2px;top:232.9px;">2017/1/8</div>
<div class="r cell" style="left:194.6px;top:232.9px;">353</div>
<div class="r cell" style="left:147.2px;top:250.4px;">2017/1/15</div>
<div class="r cell" style="left:194.6px;top:250.4px;">347</div>
<div class="r cell" style="left:147.2px;top:268.0px;">2017/1/22</div>
<div class="r cell" style="left:194.6px;top:268.0px;">371</div>
<div class="r cell" style="left:147.2px;top:285.5px;">2017/1/29</div>
<div class="r cell" style="left:194.6px;top:285.5px;">372</div>
<div class="r cell" style="left:147.2px;top:303.0px;">2017/2/5</div>
<div class="r cell" style="left:194.6px;top:303.0px;">373</div>
<div class="r cell" style="left:147.2px;top:320.6px;">2017/2/12</div>
<div class="r cell" style="left:194.6px;top:320.6px;">356</div>
<div class="r cell" style="left:147.2px;top:338.1px;">2017/2/19</div>
<div class="r cell" style="left:194.6px;top:338.1px;">410</div>
<div class="r cell" style="left:147.2px;top:355.6px;">2017/2/26</div>
<div class="r cell" style="left:194.6px;top:355.6px;">371</div>
<div class="r cell" style="left:147.2px;top:373.1px;">2017/3/5</div>
<div class="r cell" style="left:194.6px;top:373.1px;">414</div>
<div class="r cell" style="left:147.2px;top:390.7px;">2017/3/12</div>
<div class="r cell" style="left:194.6px;top:390.7px;">444</div>
<div class="r cell" style="left:147.2px;top:408.2px;">2017/3/19</div>
<div class="r cell" style="left:194.6px;top:408.2px;">477</div>
<div class="r cell" style="left:147.2px;top:425.7px;">2017/3/26</div>
<div class="r cell" style="left:194.6px;top:425.7px;">425</div>
<div class="a" style="left:734.500px;top:157px;width:9.500px;height:275px;background:#dddddd"></div>
<div class="box" style="left:734.500px;top:157px;width:9.500px;height:9.300px;border-color:#c0c0c0"></div>
<svg style="left:737px;top:160px" width="4.500" height="3" viewBox="0 0 4.500 3"><path d="M0 3L2.250 0 4.500 3z" fill="#555"/></svg>
<div class="box" style="left:734.500px;top:166.500px;width:9.500px;height:64.500px;border-color:#c0c0c0"></div>
<div class="box" style="left:734.500px;top:423px;width:9.500px;height:9.300px;border-color:#c0c0c0"></div>
<svg style="left:737px;top:426.500px" width="4.500" height="3" viewBox="0 0 4.500 3"><path d="M0 0L2.250 3 4.500 0z" fill="#555"/></svg>
<div class="a" style="left:15px;top:431.8px;width:717.1px;height:1px;background:#b4b4b4"></div>
<svg style="left:32.500px;top:438.500px" width="3" height="5" viewBox="0 0 3 5"><path d="M3 0v5L0 2.500z" fill="#c4c4c4"/></svg>
<svg style="left:52px;top:438.500px" width="3" height="5" viewBox="0 0 3 5"><path d="M0 0v5L3 2.500z" fill="#c4c4c4"/></svg>
<div class="a" style="left:82.300px;top:432.3px;width:48.500px;height:16.500px;background:#fff;border-bottom:1.500px solid #217346;box-sizing:border-box"></div>
<div class="t" style="left:106.3px;top:442.4px;color:#217346;font-size:9.300px;font-weight:400;transform-origin:50% 50%;transform:translate(-50%,-50%) scaleX(0.991)">Sheet1</div>
<svg style="left:153px;top:436px" width="11.500" height="11.500" viewBox="0 0 11.500 11.500"><circle cx="5.750" cy="5.750" r="5" fill="none" stroke="#666" stroke-width=".9"/><path d="M5.750 3v5.500M3 5.750h5.500" stroke="#666" stroke-width="1"/></svg>
<div class="a" style="left:453.700px;top:438.5px;width:1px;height:1px;background:#999"></div>
<div class="a" style="left:453.700px;top:441px;width:1px;height:1px;background:#999"></div>
<div class="a" style="left:453.700px;top:443.5px;width:1px;height:1px;background:#999"></div>
<div class="a" style="left:465.300px;top:437px;width:268.500px;height:9.500px;background:#dedede"></div>
<div class="box" style="left:465.200px;top:437px;width:10px;height:9.500px;border-color:#c0c0c0"></div>
<svg style="left:468.500px;top:439.800px" width="3" height="4.500" viewBox="0 0 3 4.500"><path d="M3 0v4.500L0 2.250z" fill="#555"/></svg>
<div class="box" style="left:475.400px;top:437px;width:227.300px;height:9.500px;border-color:#c0c0c0"></div>
<div class="box" style="left:723.500px;top:437px;width:10.300px;height:9.500px;border-color:#c0c0c0"></div>
<svg style="left:727.500px;top:439.800px" width="3" height="4.500" viewBox="0 0 3 4.500"><path d="M0 0v4.500L3 2.250z" fill="#555"/></svg>
<div class="a" style="left:14px;top:451px;width:733px;height:15px;background:#f3f3f3"></div>
<div class="l" style="left:20.3px;top:460.2px;;transform-origin:0 50%;transform:translate(0,-50%) scaleX(0.857)">準備完了</div>
<svg style="left:65px;top:454.200px" width="8.500" height="8.500" viewBox="0 0 8.500 8.500"><rect x="1.500" y="2.500" width="6.500" height="5.500" fill="#fff" stroke="#666" stroke-width=".8"/><path d="M1.500 4.500h6.500M3.700 4.500v3.500M5.800 4.500v3.500" stroke="#666" stroke-width=".6"/><circle cx="1.500" cy="1.500" r="1.400" fill="#555"/><rect x="4.500" y=".5" width="3.500" height="1.800" fill="#555"/></svg>
<div class="a" style="left:542.300px;top:451px;width:25.300px;height:15px;background:#c8c8c8"></div>
<svg style="left:550.300px;top:454px" width="9" height="9" viewBox="0 0 9 9"><path d="M.5 .5h8v8h-8zM3.200 .5v8M5.800 .5v8M.5 3.200h8M.5 5.800h8" fill="none" stroke="#555" stroke-width=".8"/></svg>
<svg style="left:576px;top:454px" width="9.500" height="9" viewBox="0 0 9.500 9"><rect x=".5" y=".5" width="8.500" height="8" fill="none" stroke="#666" stroke-width=".8"/><rect x="3" y="2" width="3.500" height="5" fill="none" stroke="#666" stroke-width=".7"/></svg>
<svg style="left:601.500px;top:454px" width="9.500" height="9" viewBox="0 0 9.500 9"><rect x=".5" y=".5" width="8.500" height="8" fill="none" stroke="#666" stroke-width=".8"/><path d="M.5 5h8.500M4 .5v4.500" stroke="#666" stroke-width=".8"/></svg>
<div class="a" style="left:622.500px;top:458px;width:4px;height:1.200px;background:#444"></div>
<div class="a" style="left:630px;top:458.200px;width:67px;height:1px;background:#b8b8b8"></div>
<div class="a" style="left:662px;top:454px;width:3px;height:8px;background:#5a5a5a"></div>
<div class="a" style="left:699px;top:458px;width:5px;height:1px;background:#555"></div>
<div class="a" style="left:701px;top:456px;width:1px;height:5px;background:#555"></div>
<div class="t" style="left:722.6px;top:459.7px;font-weight:400;transform-origin:50% 50%;transform:translate(-50%,-50%) scaleX(0.915)">100%</div>
<div class="a" style="left:746px;top:57px;width:1px;height:409px;background:#e9f4ee"></div>
</div></body></html>
